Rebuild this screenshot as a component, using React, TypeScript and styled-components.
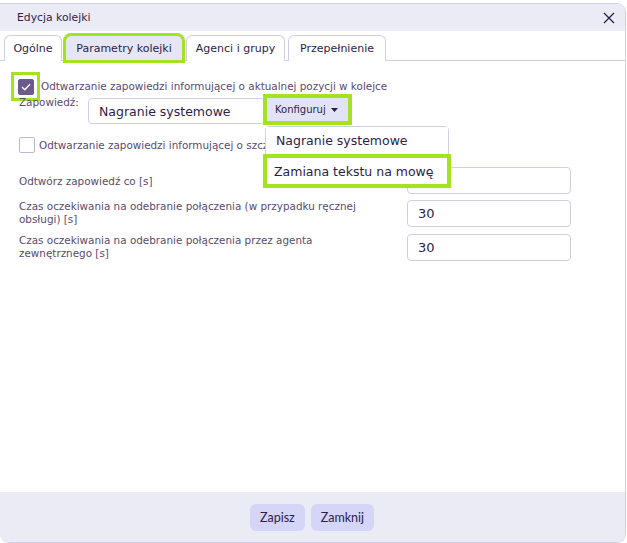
import React from "react";
import styled, {createGlobalStyle} from "styled-components";

const GlobalStyle = createGlobalStyle`
  html, body {
    margin: 0;
    padding: 0;
    background: #ffffff;
  }
  body {
    font-family: "DejaVu Sans", "Open Sans", sans-serif;
  }
`

const FONT = `"DejaVu Sans", "Open Sans", sans-serif`;
const LIME = "#a3e31f";

const Window = styled.div`
  margin-top: 3px;
  width: 626px;
  height: 540px;
  box-sizing: border-box;
  border: 1px solid #cfcfe6;
  border-left: none;
  border-radius: 0 9px 9px 9px;
  display: flex;
  flex-direction: column;
  overflow: hidden;
  background: #fff;
`

const Header = styled.div`
  height: 27px;
  flex: none;
  background: #ebebf6;
  display: flex;
  align-items: center;
  justify-content: space-between;
  padding: 0 8px 0 17px;
  font-family: ${FONT};
  font-size: 10.8px;
  color: #2d1d4c;
`

const CloseButton = styled.button`
  border: none;
  background: none;
  padding: 0;
  width: 16px;
  height: 16px;
  display: flex;
  align-items: center;
  justify-content: center;
  cursor: pointer;
`

const Body = styled.div`
  flex: 1;
  display: flex;
  flex-direction: column;
  position: relative;
`

const TabBar = styled.div`
  display: flex;
  align-items: flex-end;
  gap: 3px;
  padding: 2px 0 0 4px;
  height: 27px;
  border-bottom: 1px solid #cfcfe6;
`

const Tab = styled.div<{ $active?: boolean; $width: number }>`
  width: ${p => p.$width}px;
  height: 26px;
  box-sizing: border-box;
  display: flex;
  align-items: center;
  justify-content: center;
  border: 1px solid #cfcfe6;
  border-bottom: none;
  border-radius: 6px 6px 0 0;
  background: ${p => p.$active ? "#e6e6f5" : "#fff"};
  outline: ${p => p.$active ? `3px solid ${LIME}` : "none"};
  outline-offset: -1px;
  font-family: ${FONT};
  font-size: 11px;
  color: #2d1d4c;
  margin-bottom: -1px;
`

const Content = styled.div`
  padding: 11px 0 0 0;
  display: flex;
  flex-direction: column;
  position: relative;
`

const CheckRow = styled.div<{ $plain?: boolean; $gap?: number }>`
  display: flex;
  align-items: center;
  gap: 4px;
  padding-left: ${p => p.$plain ? 19 : 11}px;
  margin-top: ${p => p.$gap ?? 0}px;
`

const CheckHighlight = styled.div`
  width: 23px;
  height: 23px;
  border: 3px solid ${LIME};
  display: flex;
  align-items: center;
  justify-content: center;
  margin-right: -3px;
`

const CheckBox = styled.span<{ $checked?: boolean }>`
  width: 16px;
  height: 16px;
  box-sizing: border-box;
  border-radius: 2px;
  border: 1px solid ${p => p.$checked ? "#6c5a8d" : "#b8b8d4"};
  background: ${p => p.$checked ? "#6c5a8d" : "#fff"};
  display: flex;
  align-items: center;
  justify-content: center;
`

const Label = styled.span`
  font-family: ${FONT};
  font-size: 10.4px;
  color: #5a4a72;
  line-height: 13px;
`

const AnnounceRow = styled.div`
  display: flex;
  align-items: flex-start;
  padding-left: 19px;
  margin-top: -7px;
  position: relative;
  z-index: 2;
`

const AnnounceLabel = styled(Label)`
  width: 69px;
  padding-top: 2px;
`

const Select = styled.div`
  width: 177px;
  height: 26px;
  box-sizing: border-box;
  border: 1px solid #cfcfe6;
  border-radius: 4px;
  margin-top: 4px;
  display: flex;
  align-items: center;
  padding-left: 10px;
  font-family: ${FONT};
  font-size: 12.5px;
  color: #2d1d4c;
`

const ConfigWrap = styled.div`
  position: relative;
  margin-left: -2px;
`

const ConfigButton = styled.button`
  width: 89px;
  height: 31px;
  box-sizing: border-box;
  border: 4px solid ${LIME};
  background: #e3e3f8;
  padding: 0 0 0 8px;
  display: flex;
  align-items: center;
  gap: 5px;
  font-family: ${FONT};
  font-size: 10px;
  color: #2d1d4c;
  cursor: pointer;
`

const Menu = styled.div`
  position: absolute;
  top: 32px;
  left: 2px;
  width: 184px;
  box-sizing: border-box;
  background: #fff;
  border: 1px solid #cfcfe6;
  border-radius: 4px;
`

const MenuItem = styled.div<{ $highlight?: boolean }>`
  height: ${p => p.$highlight ? 34 : 27}px;
  box-sizing: border-box;
  display: flex;
  align-items: center;
  padding-left: ${p => p.$highlight ? 7 : 10}px;
  font-family: ${FONT};
  font-size: 12.5px;
  white-space: nowrap;
  color: #2d1d4c;
  background: #fff;
  border: ${p => p.$highlight ? `4px solid ${LIME}` : "none"};
  margin: ${p => p.$highlight ? "0 -3px -3px -3px" : "0"};
`

const FieldRow = styled.div<{ $gap: number }>`
  display: flex;
  align-items: flex-start;
  justify-content: space-between;
  padding: 0 54px 0 19px;
  margin-top: ${p => p.$gap}px;
`

const FieldLabel = styled(Label)<{ $offset?: number }>`
  width: 345px;
  padding-top: ${p => p.$offset ?? 0}px;
`

const Input = styled.div`
  width: 164px;
  height: 27px;
  box-sizing: border-box;
  border: 1px solid #cfcfe6;
  border-radius: 4px;
  display: flex;
  align-items: center;
  padding-left: 10px;
  font-family: ${FONT};
  font-size: 13px;
  color: #2d1d4c;
`

const Footer = styled.div`
  height: 50px;
  flex: none;
  background: #ebebf6;
  display: flex;
  justify-content: center;
  align-items: center;
  gap: 6px;
  padding-right: 1px;
`

const FooterButton = styled.button`
  height: 27px;
  border: none;
  border-radius: 6px;
  background: #d5d5f8;
  padding: 0 10px;
  font-family: "Lato", "Noto Sans", sans-serif;
  font-size: 12.5px;
  color: #2d1d4c;
  cursor: pointer;
`

function Check() {
    return (
        <svg width="10" height="8" viewBox="0 0 10 8">
            <path d="M1 4 L3.8 6.8 L9 1.2" fill="none" stroke="#fff" strokeWidth="1.4"/>
        </svg>
    )
}

export default function App() {
    return (
        <>
            <GlobalStyle/>
            <Window>
                <Header>
                    <span>Edycja kolejki</span>
                    <CloseButton aria-label="Zamknij">
                        <svg width="12" height="12" viewBox="0 0 12 12">
                            <path d="M1 1 L11 11 M11 1 L1 11" stroke="#2d1d4c" strokeWidth="1.3"/>
                        </svg>
                    </CloseButton>
                </Header>
                <Body>
                    <TabBar>
                        <Tab $width={58}>Ogólne</Tab>
                        <Tab $width={118} $active>Parametry kolejki</Tab>
                        <Tab $width={99}>Agenci i grupy</Tab>
                        <Tab $width={98}>Przepełnienie</Tab>
                    </TabBar>
                    <Content>
                        <CheckRow>
                            <CheckHighlight>
                                <CheckBox $checked><Check/></CheckBox>
                            </CheckHighlight>
                            <Label>Odtwarzanie zapowiedzi informującej o aktualnej pozycji w kolejce</Label>
                        </CheckRow>
                        <AnnounceRow>
                            <AnnounceLabel>Zapowiedź:</AnnounceLabel>
                            <Select>Nagranie systemowe</Select>
                            <ConfigWrap>
                                <ConfigButton>
                                    Konfiguruj
                                    <svg width="7" height="4" viewBox="0 0 7 4">
                                        <path d="M0 0 L7 0 L3.5 4 Z" fill="#2d1d4c"/>
                                    </svg>
                                </ConfigButton>
                                <Menu>
                                    <MenuItem>Nagranie systemowe</MenuItem>
                                    <MenuItem $highlight>Zamiana tekstu na mowę</MenuItem>
                                </Menu>
                            </ConfigWrap>
                        </AnnounceRow>
                        <CheckRow $plain $gap={12}>
                            <CheckBox/>
                            <Label>Odtwarzanie zapowiedzi informującej o szczegółach</Label>
                        </CheckRow>
                        <FieldRow $gap={14}>
                            <FieldLabel $offset={8}>Odtwórz zapowiedź co [s]</FieldLabel>
                            <Input/>
                        </FieldRow>
                        <FieldRow $gap={6}>
                            <FieldLabel>Czas oczekiwania na odebranie połączenia (w przypadku ręcznej obsługi) [s]</FieldLabel>
                            <Input>30</Input>
                        </FieldRow>
                        <FieldRow $gap={7}>
                            <FieldLabel>Czas oczekiwania na odebranie połączenia przez agenta zewnętrznego [s]</FieldLabel>
                            <Input>30</Input>
                        </FieldRow>
                    </Content>
                </Body>
                <Footer>
                    <FooterButton>Zapisz</FooterButton>
                    <FooterButton>Zamknij</FooterButton>
                </Footer>
            </Window>
        </>
    )
}
